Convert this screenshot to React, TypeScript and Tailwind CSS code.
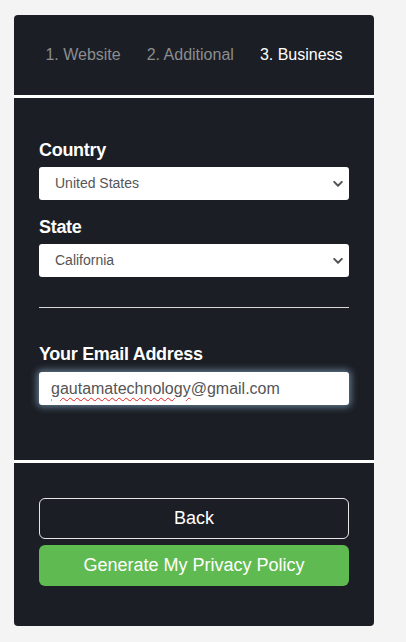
import { useState } from 'react';

const font = { fontFamily: '"Liberation Sans", Arial, sans-serif' };

function Chevron() {
  return (
    <svg
      className="pointer-events-none absolute right-[6px] top-1/2 -translate-y-1/2"
      width="10"
      height="7"
      viewBox="0 0 10 7"
      fill="none"
    >
      <path d="M1.2 1.4 L5 5.2 L8.8 1.4" stroke="#555" strokeWidth="2" strokeLinecap="round" strokeLinejoin="round" />
    </svg>
  );
}

function SelectField({ label, value, options }: { label: string; value: string; options: string[] }) {
  const [v, setV] = useState(value);
  return (
    <div>
      <div className="mb-[7px] text-[18px] font-bold leading-[20px] tracking-[-0.3px] text-white">{label}</div>
      <div className="relative">
        <select
          value={v}
          onChange={(e) => setV(e.target.value)}
          className="block h-[33px] w-full appearance-none rounded-[3px] bg-white pl-[16px] text-[14px] text-[#555] outline-none"
          style={font}
        >
          {options.map((o) => (
            <option key={o}>{o}</option>
          ))}
        </select>
        <Chevron />
      </div>
    </div>
  );
}

export default function App() {
  const steps = ['1. Website', '2. Additional', '3. Business'];
  return (
    <div className="min-h-[642px] bg-[#f4f4f4] pt-[15px] pl-[14px]" style={font}>
      <div className="w-[360px] overflow-hidden rounded-[4px] bg-[#1b1e24]">
        {/* steps */}
        <div className="flex h-[80px] items-center justify-center gap-[26px] text-[16px]">
          {steps.map((s, i) => (
            <span key={s} className={i === 2 ? 'text-white' : 'text-[#8b8d90]'}>
              {s}
            </span>
          ))}
        </div>
        <div className="h-[3px] bg-white" />

        {/* form */}
        <div className="px-[25px] pt-[42px] pb-[55px]">
          <SelectField label="Country" value="United States" options={['United States', 'Canada', 'United Kingdom']} />
          <div className="mt-[17px]">
            <SelectField label="State" value="California" options={['California', 'New York', 'Texas']} />
          </div>
          <div className="mt-[30px] h-px bg-[#d9d9d9]" />
          <div className="mt-[36px]">
            <div className="mb-[8px] text-[18px] font-bold leading-[20px] tracking-[-0.3px] text-white">
              Your Email Address
            </div>
            <div className="flex h-[33px] items-center rounded-[3px] bg-white pl-[12px] text-[16px] text-[#555] shadow-[0_0_7px_2px_rgba(160,200,235,0.55)]">
              <span className="underline decoration-[#d22] decoration-wavy decoration-1 underline-offset-[3px]">
                gautamatechnology
              </span>
              <span>@gmail.com</span>
            </div>
          </div>
        </div>
        <div className="h-[3px] bg-white" />

        {/* actions */}
        <div className="flex flex-col gap-[6px] px-[25px] pt-[35px] pb-[40px]">
          <button className="h-[41px] rounded-[6px] border border-[#e6e6e6] text-[18px] text-white" style={font}>
            Back
          </button>
          <button className="h-[41px] rounded-[6px] bg-[#5fbb51] text-[18px] text-white" style={font}>
            Generate My Privacy Policy
          </button>
        </div>
      </div>
    </div>
  );
}
